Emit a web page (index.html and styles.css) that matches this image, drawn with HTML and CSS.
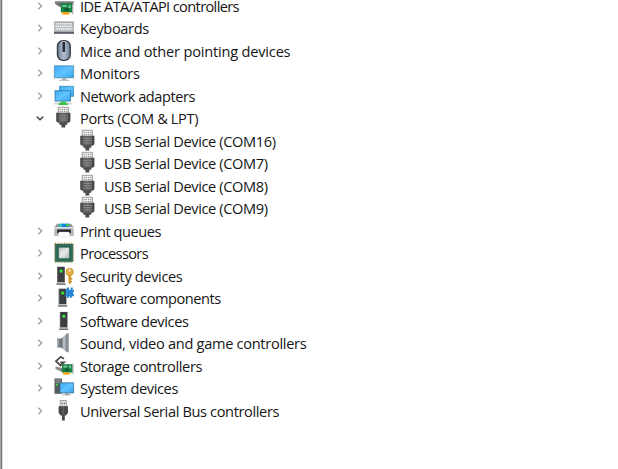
FILE: index.html
```html
<!DOCTYPE html>
<html lang="en">
<head>
<meta charset="utf-8">
<title>Device Manager</title>
<link rel="stylesheet" href="styles.css">
</head>
<body>
<svg class="defs" aria-hidden="true">
  <defs>
    <linearGradient id="blue" x1="0" y1="0" x2="1" y2="1"><stop offset="0" stop-color="#39a8f3"/><stop offset=".5" stop-color="#62c3ff"/><stop offset="1" stop-color="#35a5ef"/></linearGradient>
    <linearGradient id="metal" x1="0" y1="0" x2="1" y2="0"><stop offset="0" stop-color="#555b60"/><stop offset=".5" stop-color="#c7cdd1"/><stop offset="1" stop-color="#777d82"/></linearGradient>
    <linearGradient id="mouse" x1="0" y1="0" x2="1" y2="0"><stop offset="0" stop-color="#6f7f91"/><stop offset=".5" stop-color="#b0bfce"/><stop offset="1" stop-color="#718294"/></linearGradient>
    <linearGradient id="chip" x1="0" y1="0" x2="1" y2="1"><stop offset="0" stop-color="#bfc3c2"/><stop offset=".5" stop-color="#e9eaea"/><stop offset="1" stop-color="#b5b9b8"/></linearGradient>
    <linearGradient id="keys" x1="0" y1="0" x2="0" y2="1"><stop offset="0" stop-color="#a1a7ad"/><stop offset=".75" stop-color="#c0c4c9"/><stop offset="1" stop-color="#62686e"/></linearGradient>
    <linearGradient id="plug" x1="0" y1="0" x2="1" y2="0"><stop offset="0" stop-color="#484848"/><stop offset=".5" stop-color="#686868"/><stop offset="1" stop-color="#424242"/></linearGradient>
  </defs>
  <symbol id="right" viewBox="0 0 8 10"><path d="M2.3 1.7 5.6 5 2.3 8.3" fill="none" stroke="#a3a3a3" stroke-width="1.4"/></symbol>
  <symbol id="down" viewBox="0 0 8 10"><path d="M.7 3.5 4 6.8 7.3 3.5" fill="none" stroke="#404040" stroke-width="1.4"/></symbol>
  <symbol id="tower" viewBox="0 0 10 19"><path d="M1.2.5h7.6v15.8H1.2z" fill="#3b3e40"/><path d="M1.2.5h1v15.8h-1z" fill="#606466"/><path d="M3.7 3.5h2.8v2.7H3.7z" fill="#39ed3b"/><path d="M1.2 16.2h7.6v1H1.2z" fill="#d5d5d5"/><path d="M.4 17.2h9.2v1.2H.4z" fill="#4c4c4c"/></symbol>
  <symbol id="board" viewBox="0 0 13 12"><path d="M.5.5h11v8.8H.5z" fill="#188144"/><path d="M2 2h4v2H2zm6 0h2v3H8z" fill="#75c79a"/><path d="M4 5h4v3H4z" fill="#075c33"/><path d="M1.5 9h7.3v2.3H1.5z" fill="#ffad16"/><path d="M4 9v2.3M6.3 9v2.3" stroke="#e5850a" stroke-width=".5"/><path d="M12 0v11" stroke="#9b9f9d" stroke-width="1"/></symbol>
  <symbol id="ide" viewBox="0 0 20 20"><path d="M1 5.3h18.5v3.5H7.2v2H5.4L1 7.7z" fill="#707070"/><path d="M1 5.3h18.5v1H1z" fill="#a4a4a4"/><use href="#board" x="6.3" y="6.8" width="13.5" height="12.5"/></symbol>
  <symbol id="keyboard" viewBox="0 0 20 20"><path d="M0 3.4h20v12.2H0z" fill="url(#keys)"/><path d="M1.5 5.7h17M1.5 8.2h17M2.3 10.7h15.5" stroke="#f5f6f7" stroke-width="1.5" stroke-dasharray="1.5 .65"/><path d="M0 14h20v1.6H0z" fill="#596067"/></symbol>
  <symbol id="mice" viewBox="0 0 20 20"><rect x="3.5" y="-.4" width="12.7" height="19.8" rx="5.5" fill="url(#mouse)" stroke="#343d46" stroke-width="1.4"/><path d="M9.8.4v11" stroke="#d5dde3" stroke-width="4"/><path d="M9.8 1v10" stroke="#262d33" stroke-width="2.8"/></symbol>
  <symbol id="monitor" viewBox="0 0 20 20"><path d="M.4 2.8h19.2v12H.4z" fill="url(#blue)" stroke="#477e9f" stroke-width=".7"/><path d="M8 15.1h4v1.8H8z" fill="#a7b2b9"/><path d="M5 16.8h10v.8H5z" fill="#8b999f"/></symbol>
  <symbol id="network" viewBox="0 0 20 20"><path d="M5.5.3h14v10h-14z" fill="url(#blue)" stroke="#287dae" stroke-width=".7"/><path d="M1 4.7h15.5v10.4H1z" fill="url(#blue)" stroke="#236f9e" stroke-width=".7"/><path d="M0 16.6h18v1.9H0z" fill="#d4d7d4"/><path d="M7 15.4h4.5l.5 1.3 2 .8v1.5H4.5v-1.5l2-.8z" fill="#35c745"/></symbol>
  <symbol id="port" viewBox="0 0 20 20"><path d="M4.2-.7h10.2v6H4.2z" fill="#eee" stroke="#777" stroke-width=".7"/><path d="M5.6 1.5h7.8M5.6 3.5h7.8" stroke="#888" stroke-width="1" stroke-dasharray="1.1 1.1"/><path d="M2.2 4.8h14.2v8.4l-1.6 1.5H3.8l-1.6-1.5z" fill="url(#plug)"/><path d="M5 7.3h9M5 9.7h9M5.3 12h8.4" stroke="#a2a2a2" stroke-width=".7"/><path d="M5.3 14.3h8v2.4h-2v2.8H7.4v-2.8H5.3z" fill="#4a4a4a"/></symbol>
  <symbol id="printer" viewBox="0 0 20 20"><path d="M3 2.7h14l2.5 3.5H.5z" fill="#8f9699"/><path d="M5 2.7h4v4H5z" fill="#27c3c1"/><path d="M8 2.7h7v4H8z" fill="#187fe0"/><path d="M12 3h3v2h-3z" fill="#36d13a"/><path d="M.2 6h19.6v9H.2z" fill="#b4b9bd"/><path d="M.2 6h19.6v1.5H.2z" fill="#dce0e2"/><path d="M3.2 8.5h13.6v3.8H3.2z" fill="#202326"/><path d="M5 11h10l1 5H4z" fill="#fff" stroke="#ccc" stroke-width=".4"/></symbol>
  <symbol id="cpu" viewBox="0 0 20 20"><path d="M1 .3h18M1 19.2h18M.6.8v18M19.5.8v18" stroke="#a58a43" stroke-width="1.2" stroke-dasharray="1 .8"/><path d="M1.1 1h17.8v17.8H1.1z" fill="#276352"/><path d="M2.1 2h15.8v15.8H2.1z" fill="none" stroke="#3d7e68" stroke-width=".7"/><path d="M5 4.8h10v10.3H5z" fill="url(#chip)" stroke="#a9b5b1" stroke-width=".6"/></symbol>
  <symbol id="security" viewBox="0 0 20 20"><use href="#tower" x="2" y=".3" width="10" height="19"/><path d="M14.4 8h2.7v9l-1.5 1.2-1.2-1.2z" fill="#d49a2e"/><circle cx="15.7" cy="6" r="3.7" fill="#e5ae42" stroke="#c28722" stroke-width=".6"/><circle cx="15.7" cy="4.6" r="1" fill="#fff"/><path d="M17 12h1.3v1.5H17zM17 15h1v1.3h-1z" fill="#c28722"/></symbol>
  <symbol id="component" viewBox="0 0 20 20"><use href="#tower" x="3.6" y=".2" width="10" height="19"/><path d="M12.8-.5h2.2v2.3h1.7V-.5h2v2.3h1.2v2.5h-1v1.5h1v2.5h-2v1.4h-2V8.3h-1v1.4h-2V8.3H11.3V5.8h1.2V4.3h-1.2V1.8h1.5z" fill="#2587d4"/></symbol>
  <symbol id="software" viewBox="0 0 20 20"><use href="#tower" x="4.7" y=".4" width="10" height="19"/></symbol>
  <symbol id="sound" viewBox="0 0 20 20"><path d="M3.2 5.5h4v9h-4z" fill="#737a80"/><path d="M3.2 5.5h1.5v9H3.2z" fill="#a9b1b6"/><path d="M7 5.6 13 .4v18.8l-6-4.7z" fill="url(#metal)"/><path d="M13 .3h1.8v19H13z" fill="#8d969d"/></symbol>
  <symbol id="storage" viewBox="0 0 20 20"><path d="M10 2.8 6.7.8 2 5.2l4.5 4.3L10 6.3H6.2" fill="none" stroke="#4c4c4c" stroke-width="1.8"/><path d="M1.5 10.5 8 12v4l-6.5-3z" fill="#8a8a8a"/><use href="#board" x="7.5" y="7.6" width="12.5" height="11.7"/></symbol>
  <symbol id="system" viewBox="0 0 20 20"><path d="M.5.5h7.4v15.3H.5z" fill="#555c60"/><path d="M1.4 2.2h5.5M1.4 4.2h5.5" stroke="#b6bdc0" stroke-width=".7"/><path d="M2 5.7h1.7v1.7H2z" fill="#3beb41"/><path d="M6 4.8h13.6v10.1H6z" fill="url(#blue)" stroke="#356f90" stroke-width=".8"/><path d="M11 15.2h3.5v1.3H11zM8.5 16.4h8.5v.8H8.5z" fill="#8e9aa0"/></symbol>
  <symbol id="usb" viewBox="0 0 20 20"><path d="M6.2-.5h6.2v6H6.2z" fill="#ddd" stroke="#828282" stroke-width=".7"/><path d="M7.7 1.7h1v1.5h-1zm2.2 0h1v1.5h-1z" fill="#555"/><path d="M4.6 5.3h9.4v6.5l-2 2.7h-1.2v5H7.9v-5H6.6l-2-2.7z" fill="#494949"/><path d="M8.8 5.8h1v8h-1z" fill="#6b6b6b"/></symbol>
</svg>
<main class="tree">
  <div class="row"><svg class="arrow"><use href="#right"/></svg><svg class="icon"><use href="#ide"/></svg><span class="label tight">IDE ATA/ATAPI controllers</span></div>
  <div class="row"><svg class="arrow"><use href="#right"/></svg><svg class="icon"><use href="#keyboard"/></svg><span class="label">Keyboards</span></div>
  <div class="row"><svg class="arrow"><use href="#right"/></svg><svg class="icon"><use href="#mice"/></svg><span class="label loose">Mice and other pointing devices</span></div>
  <div class="row"><svg class="arrow"><use href="#right"/></svg><svg class="icon"><use href="#monitor"/></svg><span class="label loose">Monitors</span></div>
  <div class="row"><svg class="arrow"><use href="#right"/></svg><svg class="icon"><use href="#network"/></svg><span class="label snug">Network adapters</span></div>
  <div class="row"><svg class="arrow"><use href="#down"/></svg><svg class="icon"><use href="#port"/></svg><span class="label">Ports (COM &amp; LPT)</span></div>
  <div class="row child"><svg class="icon"><use href="#port"/></svg><span class="label">USB Serial Device (COM16)</span></div>
  <div class="row child"><svg class="icon"><use href="#port"/></svg><span class="label">USB Serial Device (COM7)</span></div>
  <div class="row child"><svg class="icon"><use href="#port"/></svg><span class="label">USB Serial Device (COM8)</span></div>
  <div class="row child"><svg class="icon"><use href="#port"/></svg><span class="label">USB Serial Device (COM9)</span></div>
  <div class="row"><svg class="arrow"><use href="#right"/></svg><svg class="icon"><use href="#printer"/></svg><span class="label snug">Print queues</span></div>
  <div class="row"><svg class="arrow"><use href="#right"/></svg><svg class="icon"><use href="#cpu"/></svg><span class="label tight">Processors</span></div>
  <div class="row"><svg class="arrow"><use href="#right"/></svg><svg class="icon"><use href="#security"/></svg><span class="label">Security devices</span></div>
  <div class="row"><svg class="arrow"><use href="#right"/></svg><svg class="icon"><use href="#component"/></svg><span class="label snug">Software components</span></div>
  <div class="row"><svg class="arrow"><use href="#right"/></svg><svg class="icon"><use href="#software"/></svg><span class="label">Software devices</span></div>
  <div class="row"><svg class="arrow"><use href="#right"/></svg><svg class="icon"><use href="#sound"/></svg><span class="label even">Sound, video and game controllers</span></div>
  <div class="row"><svg class="arrow"><use href="#right"/></svg><svg class="icon"><use href="#storage"/></svg><span class="label">Storage controllers</span></div>
  <div class="row"><svg class="arrow"><use href="#right"/></svg><svg class="icon"><use href="#system"/></svg><span class="label">System devices</span></div>
  <div class="row"><svg class="arrow"><use href="#right"/></svg><svg class="icon"><use href="#usb"/></svg><span class="label">Universal Serial Bus controllers</span></div>
</main>
</body>
</html>
```
FILE: styles.css
```css
* { box-sizing: border-box; }
html, body { height: 100%; }
body { margin: 0; overflow: hidden; background: #fff; }
.defs { display: block; width: 0; height: 0; }
symbol { overflow: visible; }
.tree {
  height: 100%;
  display: grid;
  grid-template-rows: 17.2px;
  grid-auto-rows: 22.5px;
  align-content: start;
  border-left: 1px solid #a7a7a7;
  box-shadow: inset 1px 0 #777, inset 2px 0 #d8d8d8;
  padding-left: 35px;
  overflow: hidden;
}
.row {
  height: 22.5px;
  display: flex;
  align-items: center;
  font: 14.6px/20px "Open Sans", "Noto Sans", sans-serif;
  letter-spacing: -0.37px;
  color: #161616;
  white-space: nowrap;
}
.row:first-child { margin-top: -5px; }
.arrow { width: 8px; height: 10px; margin-right: 10px; flex: none; }
.icon { width: 20px; height: 20px; margin-right: 6px; flex: none; overflow: visible; }
.child { padding-left: 42px; }
.label { flex: none; }
.loose { letter-spacing: -0.2px; }
.even { letter-spacing: -0.3px; }
.snug { letter-spacing: -0.46px; }
.tight { letter-spacing: -0.63px; }
```
